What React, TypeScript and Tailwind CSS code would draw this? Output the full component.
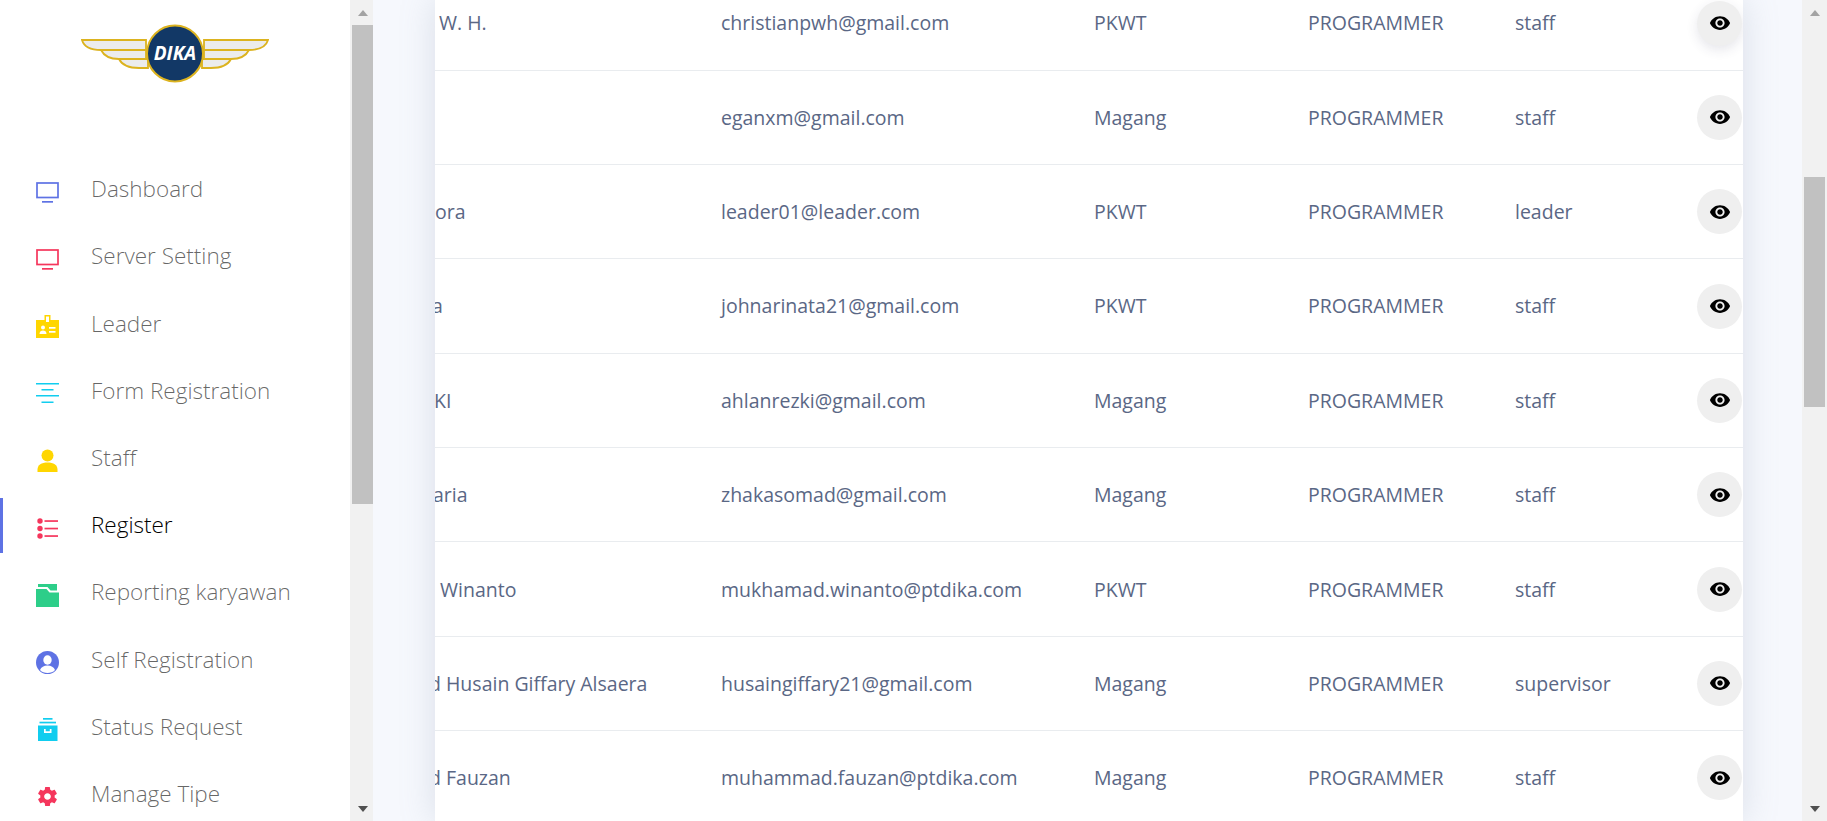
const navItems = [
    { label: "Dashboard", icon: "monitorBlue" },
    { label: "Server Setting", icon: "monitorRed" },
    { label: "Leader", icon: "badge" },
    { label: "Form Registration", icon: "align" },
    { label: "Staff", icon: "person" },
    { label: "Register", icon: "list", active: true },
    { label: "Reporting karyawan", icon: "folder" },
    { label: "Self Registration", icon: "account" },
    { label: "Status Request", icon: "archive" },
    { label: "Manage Tipe", icon: "gear" },
];

const rows = [
    { name: "W. H.", nameClass: "ml-[4px]", email: "christianpwh@gmail.com", type: "PKWT", role: "staff", hover: true },
    { name: "", nameClass: "", email: "eganxm@gmail.com", type: "Magang", role: "staff" },
    { name: "ora", nameClass: "ml-[0px]", email: "leader01@leader.com", type: "PKWT", role: "leader" },
    { name: "a", nameClass: "ml-[-3px]", email: "johnarinata21@gmail.com", type: "PKWT", role: "staff" },
    { name: "KI", nameClass: "ml-[-1px]", email: "ahlanrezki@gmail.com", type: "Magang", role: "staff" },
    { name: "aria", nameClass: "ml-[-2px]", email: "zhakasomad@gmail.com", type: "Magang", role: "staff" },
    { name: "Winanto", nameClass: "ml-[5px]", email: "mukhamad.winanto@ptdika.com", type: "PKWT", role: "staff" },
    { name: "d Husain Giffary Alsaera", nameClass: "ml-[-6px]", email: "husaingiffary21@gmail.com", type: "Magang", role: "supervisor" },
    { name: "d Fauzan", nameClass: "ml-[-6px]", email: "muhammad.fauzan@ptdika.com", type: "Magang", role: "staff" },
];

const NavIcon = ({ name }: { name: string }) => {
    switch (name) {
        case "monitorBlue":
        case "monitorRed": {
            const c = name === "monitorBlue" ? "#5e72e4" : "#f5365c";
            return (
                <svg width="23" height="23" viewBox="0 0 23 23" fill="none">
                    <rect x="1" y="2" width="21" height="14.5" stroke={c} strokeWidth="1.7" />
                    <rect x="6" y="20" width="11" height="1.7" fill={c} />
                </svg>
            );
        }
        case "badge":
            return (
                <svg width="23" height="23" viewBox="0 0 23 23">
                    <path fillRule="evenodd" d="M8.5 0h6v5H23v18H0V5h8.5zM10 1.5v5.5h3V1.5z" fill="#ffd600" />
                    <circle cx="7" cy="12.5" r="2" fill="#fff" />
                    <path d="M3.5 19c0-2.5 1.5-3.5 3.5-3.5s3.5 1 3.5 3.5z" fill="#fff" />
                    <rect x="13" y="12" width="6.5" height="1.7" fill="#fff" />
                    <rect x="13" y="16" width="6.5" height="1.7" fill="#fff" />
                </svg>
            );
        case "align":
            return (
                <svg width="23" height="23" viewBox="0 0 23 23" fill="#11cdef">
                    <rect x="0" y="1" width="23" height="1.5" />
                    <rect x="5.5" y="7" width="12" height="1.5" />
                    <rect x="0" y="13" width="23" height="1.5" />
                    <rect x="5.5" y="19.5" width="12" height="1.5" />
                </svg>
            );
        case "person":
            return (
                <svg width="23" height="23" viewBox="0 0 23 23" fill="#ffd600">
                    <circle cx="11.5" cy="6.5" r="6" />
                    <path d="M1.5 23v-2.5c0-4.5 4-7 10-7s10 2.500 10 7V23z" />
                </svg>
            );
        case "list":
            return (
                <svg width="23" height="23" viewBox="0 0 23 23" fill="#f5365c">
                    <circle cx="4" cy="4" r="2.700" />
                    <circle cx="4" cy="11.500" r="2.700" />
                    <circle cx="4" cy="19" r="2.700" />
                    <rect x="8.500" y="3.200" width="13.500" height="1.700" />
                    <rect x="8.500" y="10.700" width="13.500" height="1.700" />
                    <rect x="8.500" y="18.200" width="13.500" height="1.700" />
                </svg>
            );
        case "folder":
            return (
                <svg width="23" height="23" viewBox="0 0 23 23" fill="#2dce89">
                    <path d="M2 0H21V6.500H14.500L11.500 3H2z" />
                    <path d="M0 5H10.500L13.500 8.500H23V23H0z" />
                </svg>
            );
        case "account":
            return (
                <svg width="23" height="23" viewBox="0 0 23 23">
                    <circle cx="11.500" cy="11.500" r="11.500" fill="#5e72e4" />
                    <ellipse cx="11.500" cy="9" rx="4.200" ry="4.700" fill="#fff" />
                    <path d="M4 19c1-3 4-4.500 7.500-4.500S18 16 19 19c-2 2.200-4.500 3-7.500 3S6 21.200 4 19z" fill="#fff" />
                </svg>
            );
        case "archive":
            return (
                <svg width="23" height="23" viewBox="0 0 23 23" fill="#11cdef">
                    <rect x="7" y="0" width="9.500" height="1.700" />
                    <rect x="3.500" y="3.700" width="16.500" height="1.700" />
                    <path fillRule="evenodd" d="M2 7.500h19.500V23H2zM8 11v4h7.500v-4h-1.700v2.200H9.700V11z" />
                </svg>
            );
        case "gear":
            return (
                <svg width="23" height="23" viewBox="0 0 24 24">
                    <path
                        fill="#f5365c"
                        d="M19.430 12.980c.040-.320.070-.640.070-.980s-.030-.660-.070-.980l2.110-1.650c.190-.150.240-.420.120-.640l-2-3.460c-.120-.220-.390-.300-.610-.220l-2.490 1c-.520-.400-1.080-.730-1.690-.980l-.380-2.650A.488.488 0 0 0 14 2h-4c-.250 0-.460.180-.490.420l-.380 2.650c-.610.250-1.170.590-1.690.980l-2.490-1c-.230-.090-.490 0-.610.220l-2 3.460c-.130.220-.070.490.120.640l2.110 1.650c-.040.320-.070.650-.070.980s.030.660.070.980l-2.110 1.650c-.190.150-.240.420-.120.640l2 3.460c.120.220.390.300.610.220l2.490-1c.520.400 1.080.730 1.690.980l.380 2.650c.030.240.240.420.490.420h4c.250 0 .460-.180.490-.420l.380-2.650c.610-.250 1.170-.590 1.690-.980l2.490 1c.230.090.490 0 .610-.220l2-3.460c.120-.220.070-.490-.120-.640l-2.110-1.650zM12 15.500c-1.930 0-3.500-1.570-3.500-3.500s1.570-3.500 3.500-3.500 3.500 1.570 3.500 3.500-1.570 3.500-3.500 3.500z"
                    />
                </svg>
            );
        default:
            return null;
    }
};

const Logo = () => (
    <svg width="188" height="60" viewBox="0 0 188 60" fill="none">
        {/* wings */}
        <g fill="#ececec" stroke="#dcb31f" strokeWidth="1.800">
            <path d="M1 16h64v10H20C10 26 3 23 1 16z" />
            <path d="M20 26h45v9H38c-9 0-15-3-18-9z" />
            <path d="M38 35h29v9H58c-9 0-17-3-20-9z" />
            <path d="M187 16h-64v10h45c10 0 17-3 19-10z" />
            <path d="M168 26h-45v9h27c9 0 15-3 18-9z" />
            <path d="M150 35h-29v9h9c9 0 17-3 20-9z" />
        </g>
        <circle cx="94" cy="29.500" r="28" fill="#123866" stroke="#dcb31f" strokeWidth="2" />
        <text
            x="94"
            y="36"
            textAnchor="middle"
            fill="#ffffff"
            fontSize="19"
            fontWeight="700"
            fontStyle="italic"
            fontFamily="'Open Sans', sans-serif"
        >
            DIKA
        </text>
    </svg>
);

const Scrollbar = ({ width, thumbClass }: { width: string; thumbClass: string }) => (
    <div className={`${width} h-full shrink-0 bg-[#f1f1f1] flex flex-col relative`}>
        <div className="h-[25px] flex items-center justify-center">
            <div className="w-0 h-0 border-x-[5.5px] border-x-transparent border-b-[6px] border-b-[#a3a3a3]" />
        </div>
        <div className={`${thumbClass} bg-[#c1c1c1]`} />
        <div className="mt-auto h-[25px] flex items-center justify-center">
            <div className="w-0 h-0 border-x-[5.5px] border-x-transparent border-t-[6px] border-t-[#505050]" />
        </div>
    </div>
);

const EyeButton = ({ hover }: { hover?: boolean }) => (
    <button
        className={`w-[45px] h-[45px] rounded-full bg-[#efefef] flex items-center justify-center ${
            hover ? "shadow-[0_4px_12px_rgba(50,50,93,0.12)]" : ""
        }`}
    >
        <svg width="22" height="22" viewBox="0 0 24 24" fill="#000000">
            <path d="M12 4.500C7 4.500 2.730 7.610 1 12c1.730 4.390 6 7.500 11 7.500s9.270-3.110 11-7.500c-1.730-4.390-6-7.500-11-7.500zM12 17c-2.760 0-5-2.240-5-5s2.240-5 5-5 5 2.240 5 5-2.240 5-5 5zm0-8c-1.660 0-3 1.340-3 3s1.340 3 3 3 3-1.340 3-3-1.340-3-3-3z" />
        </svg>
    </button>
);

export default function App() {
    return (
        <div className="h-[821px] w-full flex overflow-hidden font-['Open_Sans',sans-serif] bg-[#f6f8fd]">
            {/* Sidebar */}
            <aside className="w-[350px] shrink-0 bg-white overflow-hidden">
                <div className="flex justify-center pt-[24px]">
                    <Logo />
                </div>
                <nav className="mt-[71.500px] flex flex-col">
                    {navItems.map((item) => (
                        <div
                            key={item.label}
                            className={`h-[55px] my-[6.100px] flex items-center border-l-[3px] pl-[33px] ${
                                item.active ? "border-[#5e72e4]" : "border-transparent"
                            }`}
                        >
                            <div className="w-[55px] shrink-0 mt-[6px]">
                                <NavIcon name={item.icon} />
                            </div>
                            <span
                                className={`text-[22.500px] font-light ${
                                    item.active ? "text-black" : "text-black/60"
                                }`}
                            >
                                {item.label}
                            </span>
                        </div>
                    ))}
                </nav>
            </aside>
            <Scrollbar width="w-[23px] pl-[2px]" thumbClass="h-[479px] w-full" />

            {/* Main */}
            <main className="flex-1 min-w-0 pl-[62px] pr-[59px]">
                <div className="h-full bg-white overflow-hidden shadow-[0_0_2rem_0_rgba(136,152,170,0.25)]">
                    <div className="mt-[-23.600px]">
                        {rows.map((row) => (
                            <div
                                key={row.email}
                                className="h-[94.350px] grid grid-cols-[286px_373px_214px_207px_182px_46px] items-center border-b border-[#e9ecef] text-[19.500px] text-[#5a6785]"
                            >
                                <div className="overflow-hidden whitespace-nowrap">
                                    <div className={row.nameClass}>{row.name}</div>
                                </div>
                                <div>{row.email}</div>
                                <div>{row.type}</div>
                                <div>PROGRAMMER</div>
                                <div>{row.role}</div>
                                <div>
                                    <EyeButton hover={row.hover} />
                                </div>
                            </div>
                        ))}
                    </div>
                </div>
            </main>
            <Scrollbar width="w-[25px] px-[2px]" thumbClass="mt-[152px] h-[230px] w-full" />
        </div>
    );
}
